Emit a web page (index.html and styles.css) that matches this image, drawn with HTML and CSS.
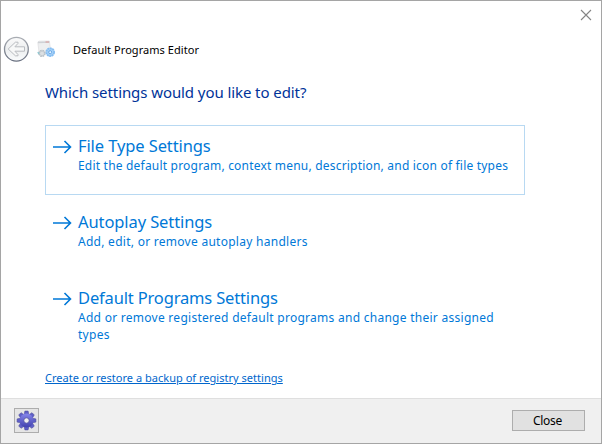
FILE: index.html
```html
<!DOCTYPE html>
<html lang="en">
<head>
<meta charset="utf-8">
<title>Default Programs Editor</title>
<link rel="stylesheet" href="styles.css">
</head>
<body>
<div class="window">
  <div class="titlebar">
    <svg class="close-icon" width="12" height="12" viewBox="0 0 12 12"><path d="M1 1L11 11M11 1L1 11" stroke="#858585" stroke-width="1.1"/></svg>
  </div>
  <header class="header">
    <svg class="back" width="26" height="26" viewBox="0 0 26 26">
      <defs><linearGradient id="ring" x2="0" y2="1"><stop stop-color="#a9adb3"/><stop offset="1" stop-color="#697080"/></linearGradient>
      <linearGradient id="disc" x2="0" y2="1"><stop stop-color="#fbfbfb"/><stop offset=".5" stop-color="#eceeef"/><stop offset="1" stop-color="#fafcfd"/></linearGradient></defs>
      <circle cx="13.4" cy="13.2" r="11.9" fill="url(#disc)" stroke="url(#ring)" stroke-width="1.3"/>
      <path d="M5.2 13L12.4 6.2H15V7.4L11.9 10.8H21.5V15.2H11.9L15 18.6V19.8H12.4Z" fill="#f7f8f8" stroke="#b9bcc0" stroke-width="1" stroke-linejoin="round"/>
    </svg>
    <svg class="app" width="18" height="18" viewBox="0 0 18 18">
      <path d="M.8 2.5Q.8 1.4 2.2 1.2L12.4 1L13.8 12H2Z" fill="#eeeff0" stroke="#dcdddf" stroke-width=".7"/>
      <path d="M1 1.8L12.6 1.4V2.8L1 3.2Z" fill="#cfd2d6"/><path d="M8.5 1.4H12V2.6H8.5Z" fill="#d9a3a3"/>
      <circle cx="5" cy="13.4" r="2.8" fill="#dce0e3" stroke="#b9c1c7" stroke-width="1.8" stroke-dasharray="1.6 .6"/>
      <path d="M.8 12.2L2.2 14.2" stroke="#8cc6cf" stroke-width="1.4"/>
      <circle cx="13.2" cy="12.2" r="3.9" fill="#a6d2f8" stroke="#86bdf1" stroke-width="1.8" stroke-dasharray="2 .5"/>
      <circle cx="13.2" cy="12.2" r="1.5" fill="#e4f3ff" stroke="#559be2" stroke-width=".8"/>
    </svg>
    <span class="title">Default Programs Editor</span>
  </header>
  <main class="content">
    <h1 class="heading">Which settings would you like to edit?</h1>
    <div class="command selected">
      <svg class="arrow" width="20" height="16" viewBox="0 0 20 16"><path d="M0 8H17.5M11.5 2L17.5 8L11.5 14"/></svg>
      <div><div class="name">File Type Settings</div><div class="desc first">Edit the default program, context menu, description, and icon of file types</div></div>
    </div>
    <div class="command">
      <svg class="arrow" width="20" height="16" viewBox="0 0 20 16"><path d="M0 8H17.5M11.5 2L17.5 8L11.5 14"/></svg>
      <div><div class="name">Autoplay Settings</div><div class="desc">Add, edit, or remove autoplay handlers</div></div>
    </div>
    <div class="command">
      <svg class="arrow" width="20" height="16" viewBox="0 0 20 16"><path d="M0 8H17.5M11.5 2L17.5 8L11.5 14"/></svg>
      <div><div class="name long">Default Programs Settings</div><div class="desc">Add or remove registered default programs and change their assigned<br>types</div></div>
    </div>
    <a class="link">Create or restore a backup of registry settings</a>
  </main>
  <footer class="footer">
    <div class="gear">
      <svg width="21" height="21" viewBox="-10.5 -10.5 21 21">
        <defs><linearGradient id="cog" x2="0" y2="1"><stop stop-color="#8585ea"/><stop offset="1" stop-color="#4242ae"/></linearGradient>
        <path id="tooth" d="M-2.3 -6L-1.6 -9.4H1.6L2.3 -6Z"/></defs>
        <g fill="#5f5fc8" stroke="#4e4e9c" stroke-width=".6">
          <use href="#tooth"/><use href="#tooth" transform="rotate(45)"/><use href="#tooth" transform="rotate(90)"/><use href="#tooth" transform="rotate(135)"/><use href="#tooth" transform="rotate(180)"/><use href="#tooth" transform="rotate(225)"/><use href="#tooth" transform="rotate(270)"/><use href="#tooth" transform="rotate(315)"/>
        </g>
        <circle r="6.9" fill="url(#cog)"/><circle r="2.7" fill="#f0f0f0" stroke="#4a4aa0" stroke-width=".8"/>
      </svg>
    </div>
    <div class="button">Close</div>
  </footer>
</div>
</body>
</html>
```
FILE: styles.css
```css
* { box-sizing: border-box; }
body { margin: 0; font-family: "Noto Sans", "Open Sans", sans-serif; }
.window { width: 602px; height: 444px; border: 1px solid #a5a5a5; background: #fff; display: flex; flex-direction: column; overflow: hidden; }
.titlebar { height: 35px; flex: none; display: flex; justify-content: flex-end; padding: 8px 9px 0 0; }
.header { height: 26px; flex: none; display: flex; align-items: center; padding-left: 2px; }
.app { margin-left: 8px; }
.title { margin-left: 18px; font-size: 11px; letter-spacing: .05px; color: #000; white-space: nowrap; }
.content { flex: 1; padding: 19px 0 0 44px; }
.heading { margin: 0; height: 22px; line-height: 22px; font-size: 15px; letter-spacing: -.08px; font-weight: 400; color: #003399; white-space: nowrap; }
.command { width: 480px; height: 70px; margin-bottom: 6px; padding: 9px 0 0 7px; border: 1px solid transparent; display: flex; white-space: nowrap; color: #0078d7; }
.selected { margin-top: 22px; border-color: #b8d9f2; }
.arrow { flex: none; margin: 4px 5px 0 0; fill: none; stroke: #0078d7; stroke-width: 1.6; }
.name { height: 22px; line-height: 21px; font-size: 16.5px; letter-spacing: -.1px; }
.long { letter-spacing: -.16px; }
.desc { line-height: 17px; font-size: 12px; letter-spacing: .27px; }
.first { letter-spacing: .2px; }
.link { display: block; width: max-content; margin-top: 22px; line-height: 17px; font-size: 11px; letter-spacing: .02px; color: #0066cc; text-decoration: underline; }
.footer { height: 45px; flex: none; background: #f0f0f0; border-top: 1px solid #dfdfdf; display: flex; justify-content: space-between; align-items: flex-start; padding: 9px 16px 0 13px; }
.gear { width: 25px; height: 25px; border: 1px solid #adadad; background: #e5e5e5; display: flex; align-items: center; justify-content: center; }
.button { width: 73px; height: 21px; margin-top: 2px; padding-right: 2px; border: 1px solid #adadad; background: #e1e1e1; text-align: center; font-size: 12px; letter-spacing: -.3px; line-height: 20px; color: #000; }
```
